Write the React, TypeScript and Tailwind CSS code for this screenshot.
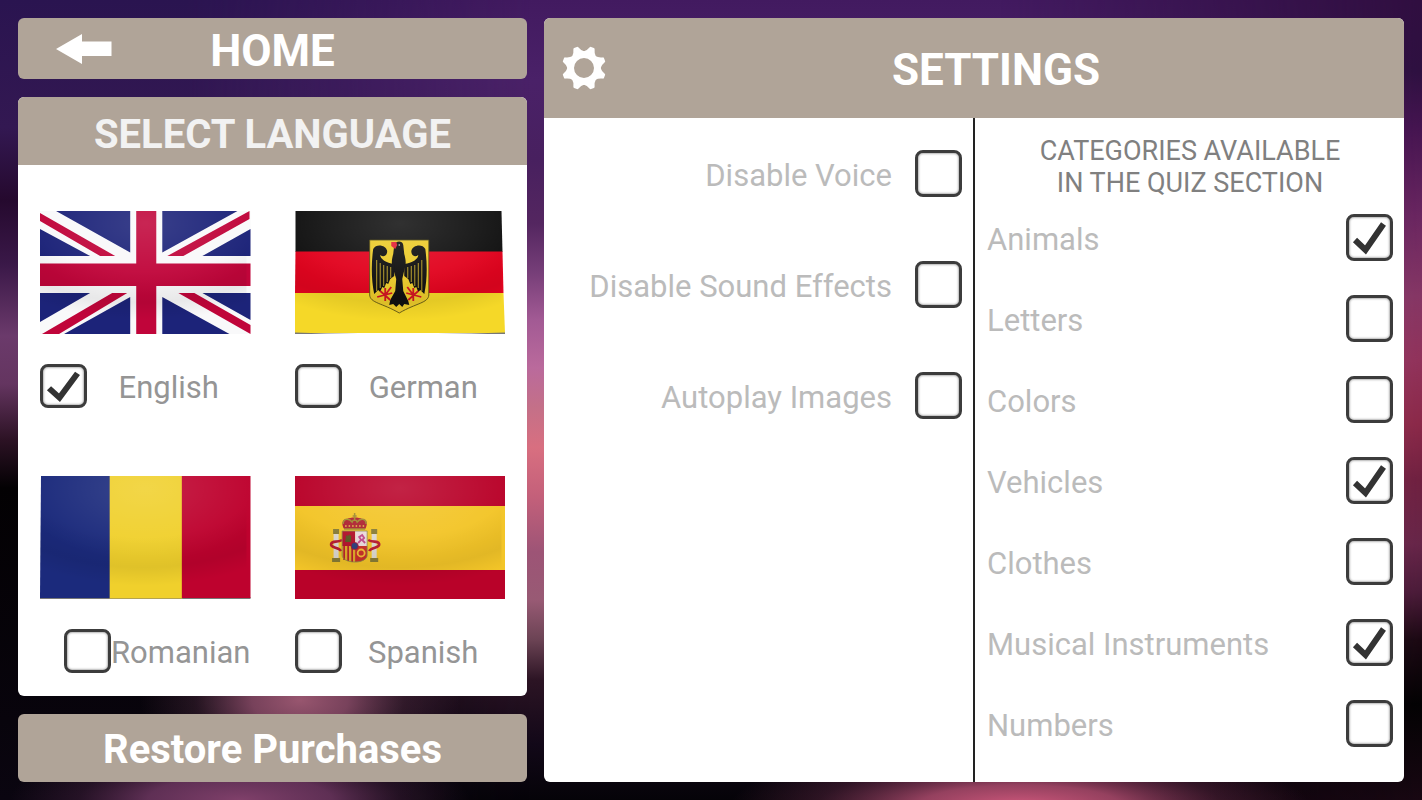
import { useState, type ReactNode } from "react";

const TOGGLES = ["Disable Voice", "Disable Sound Effects", "Autoplay Images"];

const CATEGORIES = [
  { name: "Animals", on: true },
  { name: "Letters", on: false },
  { name: "Colors", on: false },
  { name: "Vehicles", on: true },
  { name: "Clothes", on: false },
  { name: "Musical Instruments", on: true },
  { name: "Numbers", on: false },
];

const TOOTH_ANGLES = [22.5, 67.5, 112.5, 157.5, 202.5, 247.5, 292.5, 337.5];

function Backdrop() {
  return (
    <svg
      className="absolute inset-0 -z-10 h-full w-full"
      viewBox="0 0 1422 800"
      preserveAspectRatio="none"
      aria-hidden="true"
    >
      <defs>
        <linearGradient id="mid" x1="0" y1="0" x2="0" y2="1">
          <stop offset="0" stopColor="#421a60" />
          <stop offset="0.1" stopColor="#4a2168" />
          <stop offset="0.2" stopColor="#48205f" />
          <stop offset="0.28" stopColor="#542660" />
          <stop offset="0.34" stopColor="#763e78" />
          <stop offset="0.4" stopColor="#a25a94" />
          <stop offset="0.46" stopColor="#ba6a9c" />
          <stop offset="0.51" stopColor="#c47088" />
          <stop offset="0.56" stopColor="#d86f80" />
          <stop offset="0.62" stopColor="#c4607a" />
          <stop offset="0.69" stopColor="#9d5476" />
          <stop offset="0.75" stopColor="#985a74" />
          <stop offset="0.8" stopColor="#6b4354" />
          <stop offset="0.85" stopColor="#2c1424" />
          <stop offset="0.93" stopColor="#120818" />
          <stop offset="1" stopColor="#050308" />
        </linearGradient>
        <linearGradient id="west" x1="0" y1="0" x2="0" y2="1">
          <stop offset="0" stopColor="#2a1450" />
          <stop offset="0.16" stopColor="#331852" />
          <stop offset="0.25" stopColor="#25092e" />
          <stop offset="0.33" stopColor="#3a1848" />
          <stop offset="0.42" stopColor="#6b3a6b" />
          <stop offset="0.48" stopColor="#643560" />
          <stop offset="0.55" stopColor="#2c1224" />
          <stop offset="0.61" stopColor="#030103" />
          <stop offset="0.9" stopColor="#08040c" />
          <stop offset="1" stopColor="#0a0510" />
        </linearGradient>
        <linearGradient id="east" x1="0" y1="0" x2="0" y2="1">
          <stop offset="0" stopColor="#300e40" />
          <stop offset="0.09" stopColor="#2e1040" />
          <stop offset="0.16" stopColor="#451450" />
          <stop offset="0.27" stopColor="#6a2660" />
          <stop offset="0.37" stopColor="#853664" />
          <stop offset="0.45" stopColor="#90325a" />
          <stop offset="0.53" stopColor="#8a2848" />
          <stop offset="0.6" stopColor="#6e2040" />
          <stop offset="0.68" stopColor="#662548" />
          <stop offset="0.74" stopColor="#4a1a38" />
          <stop offset="0.8" stopColor="#1a0812" />
          <stop offset="0.88" stopColor="#030203" />
          <stop offset="1" stopColor="#180712" />
        </linearGradient>
        <linearGradient id="fadeRight">
          <stop offset="0.35" stopColor="#fff" />
          <stop offset="1" stopColor="#000" />
        </linearGradient>
        <linearGradient id="fadeLeft">
          <stop offset="0" stopColor="#000" />
          <stop offset="1" stopColor="#fff" />
        </linearGradient>
        <mask id="westMask">
          <rect width="530" height="800" fill="url(#fadeRight)" />
        </mask>
        <mask id="eastMask">
          <rect x="1000" width="422" height="800" fill="url(#fadeLeft)" />
        </mask>
        <radialGradient id="rose">
          <stop offset="0" stopColor="#98566f" />
          <stop offset="0.3" stopColor="#8a4c68" stopOpacity="0.85" />
          <stop offset="0.65" stopColor="#7a4560" stopOpacity="0.25" />
          <stop offset="1" stopColor="#7a4560" stopOpacity="0" />
        </radialGradient>
        <radialGradient id="plum">
          <stop offset="0" stopColor="#80406a" />
          <stop offset="0.4" stopColor="#743a66" stopOpacity="0.8" />
          <stop offset="0.7" stopColor="#643058" stopOpacity="0.3" />
          <stop offset="1" stopColor="#643058" stopOpacity="0" />
        </radialGradient>
        <radialGradient id="coral">
          <stop offset="0" stopColor="#d0587c" />
          <stop offset="0.35" stopColor="#b85074" stopOpacity="0.8" />
          <stop offset="0.7" stopColor="#8a3a60" stopOpacity="0.3" />
          <stop offset="1" stopColor="#8a3a60" stopOpacity="0" />
        </radialGradient>
      </defs>
      <rect width="1422" height="800" fill="url(#mid)" />
      <rect width="530" height="800" fill="url(#west)" mask="url(#westMask)" />
      <rect x="1000" width="422" height="800" fill="url(#east)" mask="url(#eastMask)" />
      <ellipse cx="300" cy="700" rx="160" ry="90" fill="url(#rose)" />
      <ellipse cx="240" cy="800" rx="230" ry="60" fill="url(#plum)" />
      <ellipse cx="1020" cy="806" rx="290" ry="60" fill="url(#coral)" />
    </svg>
  );
}

function ArrowIcon() {
  return (
    <svg width="56" height="30" viewBox="0 0 56 30" fill="#fff" aria-hidden="true">
      <path d="M0 15 26 0v7.5h29.5v14.5H26V30z" />
    </svg>
  );
}

function GearIcon() {
  return (
    <svg width="44" height="44" viewBox="-22 -22 44 44" aria-hidden="true">
      <circle r="13.300" fill="none" stroke="#fff" strokeWidth="6.600" />
      {TOOTH_ANGLES.map((angle) => (
        <path
          key={angle}
          d="M-6-14Q-2.800-16.500-1.500-21H1.500Q2.800-16.500 6-14z"
          transform={`rotate(${angle})`}
          fill="#fff"
          stroke="#fff"
          strokeWidth="2.400"
          strokeLinejoin="round"
        />
      ))}
    </svg>
  );
}

function FlagFrame({ id, label, children }: { id: string; label: string; children: ReactNode }) {
  return (
    <svg
      className="h-[123px] w-full"
      viewBox="0 0 210 123"
      preserveAspectRatio="none"
      role="img"
      aria-label={label}
    >
      <defs>
        <radialGradient id={`${id}-light`} cx="0.5" cy="0.1" r="0.6">
          <stop offset="0" stopColor="#fff" stopOpacity="0.13" />
          <stop offset="1" stopColor="#fff" stopOpacity="0" />
        </radialGradient>
        <radialGradient id={`${id}-fold`} cx="0.5" cy="-0.1" r="1">
          <stop offset="0.6" stopColor="#000" stopOpacity="0" />
          <stop offset="0.85" stopColor="#000" stopOpacity="0.07" />
          <stop offset="1" stopColor="#000" stopOpacity="0" />
        </radialGradient>
      </defs>
      {children}
      <rect width="210" height="122" fill={`url(#${id}-light)`} />
      <rect width="206" height="122" fill={`url(#${id}-fold)`} />
    </svg>
  );
}

function BritishFlag() {
  return (
    <FlagFrame id="gb" label="Flag of the United Kingdom">
      <rect width="210" height="123" fill="#f9f9fa" />
      <path
        fill="#1c2379"
        d="M16 0H90V41.5zM0 18 50 45H0zM122 0H197L122 41.5zM210 18V45H162zM0 82H50L0 111zM90 86V123H24zM122 86 189 123H122zM162 82H210V109z"
      />
      <path
        fill="#c0053a"
        d="M0 2 75 45H60L0 10zM209 0V8L143 45H127zM72 82H87L19 123H2zM138 82H154L210 114V123zM96 0h20v52.500h94V75h-94v48H96V75H0V52.500h96z"
      />
    </FlagFrame>
  );
}

function GermanFlag() {
  return (
    <FlagFrame id="de" label="Flag of Germany">
      <path fill="#121212" d="M.500 0H206L207 41H.500z" />
      <path fill="#e2041f" d="M.500 40.500H207L208 82H0z" />
      <path fill="#f5d828" d="M0 82H208L209.500 122H0z" />
      <path fill="#777" d="M0 121.500Q100 125 209.500 121.500V123H0z" />
      <path
        fill="#eccb2b"
        stroke="#4b4310"
        strokeWidth="0.8"
        d="M74.500 29H133.500V84C133 92 121 92 104 102C87 92 75 92 74.500 84z"
      />
      <g fill="#101010">
        <path d="M99 34c1-4 8-5 9 0l1 9c1 4 2 8 1 12l-3 13 1 12 5 10 1 4-5-1-2 3-3-3-3 3-3-3-4 1 1-5 5-9 1-12-4-13c-1-4 0-8 1-12z" />
        <path d="M99 53c-8-1-14-5-14-9 4 3 7 0 7-4-1-6-11-8-14-2-2 15-2 30 1 45l4-4 2 2 2-5 2 1 2-5 2 1 2-5 4-3z" />
        <path d="M109 53c8-1 14-5 14-9-4 3-7 0-7-4 1-6 11-8 14-2 2 15 2 30-1 45l-4-4-2 2-2-5-2 1-2-5-2 1-2-5-4-3z" />
      </g>
      <path
        stroke="#c9ae2a"
        strokeWidth="0.9"
        d="M81.500 49v31M85 52v25M88.500 54v21M92 55v16M95.500 56v11M112.500 56v11M116 55v16M119.500 54v21M123 52v25M126.500 49v31"
      />
      <path
        fill="none"
        stroke="#d01622"
        strokeWidth="1.800"
        d="m82 86 15-4M85 80l10 9M90 77v13M96 76l-6 8M126 86l-15-4M123 80l-10 9M118 77v13M112 76l6 8"
      />
      <path fill="#e22034" d="M96 31h5l1 3-2 4-4-3z" />
      <circle cx="104" cy="34" r="0.8" fill="#ddd" />
    </FlagFrame>
  );
}

function RomanianFlag() {
  return (
    <FlagFrame id="ro" label="Flag of Romania">
      <path fill="#777" d="M0 121Q105 117 210 121V123H0z" />
      <path fill="#1b2a7c" d="M1 0H70V122H0z" />
      <rect x="69.500" width="72.500" height="122.500" fill="#f0d02c" />
      <rect x="141.500" width="68.500" height="122" fill="#be022e" />
    </FlagFrame>
  );
}

function SpanishFlag() {
  return (
    <FlagFrame id="es" label="Flag of Spain">
      <rect width="210" height="123" fill="#b90229" />
      <rect y="30" width="210" height="64" fill="#f3c528" />
      <path fill="#dcd8d0" d="M38.500 58h5v24h-5zM76.500 58h5v24h-5z" />
      <path fill="#887c35" d="M38 53h6v5h-6zM76 53h6v5h-6zM37 82h8v4h-8zM75 82h8v4h-8z" />
      <path fill="none" stroke="#b81c30" strokeWidth="2.600" d="M47 64c-5 3-10 0-11 4s8 3 10 7M73 64c5 3 10 0 11 4s-8 3-10 7" />
      <path fill="#b3132c" d="M47 55h13v15H47z" />
      <path fill="#ead9dc" d="M60 55h12v15H60z" />
      <path fill="#e0ac2a" d="M47 70h13v16c-8 0-13-3-13-7z" />
      <path fill="#c8302a" d="M60 70h12v9c0 4-4 7-12 7z" />
      <path stroke="#b3132c" strokeWidth="1.500" d="M49 70v14M53 70v15M57 70v16" />
      <path fill="none" stroke="#8c8a4a" strokeWidth="0.8" d="M47 55h25v24c0 4-5 7-12 7-8 0-13-3-13-7z" />
      <path fill="#5a5a22" d="m50 66 1-7 2 1 1-2 1 2 1-1v7z" />
      <path fill="none" stroke="#c14b8c" strokeWidth="1.800" d="m63 67 3-3-2-3 3-2 2 3-2 2 3 3" />
      <circle cx="66" cy="77" r="3.500" fill="none" stroke="#f0bd35" strokeWidth="1.800" />
      <circle cx="59.500" cy="70" r="3.600" fill="#2f3f7c" stroke="#b3132c" strokeWidth="0.8" />
      <path fill="#ae2430" d="M49 53c-3-5-2-10 3-10 3-2 12-2 15 0 5 0 6 5 3 10z" />
      <path fill="none" stroke="#a08b30" strokeWidth="1.500" d="M49 53h21M48 48c0-6 6-6 9-2 1-3 4-3 5 0 3-4 9-4 9 2M59.500 37v8M57.500 40h4" />
      <path stroke="#e4c24a" strokeWidth="1.500" strokeDasharray="1.500 2" d="M50 50h20" />
    </FlagFrame>
  );
}

function CheckBox({
  id,
  defaultChecked,
  checked,
  onChange,
  short,
}: {
  id: string;
  defaultChecked?: boolean;
  checked?: boolean;
  onChange?: () => void;
  short?: boolean;
}) {
  return (
    <span className={short ? "grid h-11 w-[47px] shrink-0" : "grid h-[47px] w-[47px] shrink-0"}>
      <input
        id={id}
        type="checkbox"
        defaultChecked={defaultChecked}
        checked={checked}
        onChange={onChange}
        className="peer col-start-1 row-start-1 h-full w-full cursor-pointer appearance-none rounded-lg border-3 border-[#3c3c3c] bg-white shadow-[inset_0_0_2px_1px_#b5b5b5]"
      />
      <svg
        className="pointer-events-none invisible col-start-1 row-start-1 h-full w-full peer-checked:visible"
        viewBox="0 0 47 47"
        preserveAspectRatio="none"
        fill="none"
        stroke="#333"
        strokeWidth="6"
        aria-hidden="true"
      >
        <path d="m9 26 10.500 10L37.500 10" />
      </svg>
    </span>
  );
}

const LANGUAGES = [
  { name: "English", flag: <BritishFlag /> },
  { name: "German", flag: <GermanFlag /> },
  { name: "Romanian", flag: <RomanianFlag /> },
  { name: "Spanish", flag: <SpanishFlag /> },
];

function LanguagePanel() {
  const [language, setLanguage] = useState("English");

  return (
    <section className="flex flex-1 flex-col overflow-hidden rounded-md bg-white">
      <h2 className="flex h-[68px] items-center justify-center bg-[#b0a498] pt-2 text-[40px] leading-none font-bold text-[#f2f2f2]">
        SELECT LANGUAGE
      </h2>
      <div className="grid grid-cols-2 gap-x-11 gap-y-[68px] px-[22px] pt-[46px] pb-[22px]">
        {LANGUAGES.map(({ name, flag }) => (
          <div key={name} className="flex flex-col gap-[30px]">
            {flag}
            <div className="flex items-center justify-end">
              <CheckBox
                id={name}
                short
                checked={language === name}
                onChange={() => setLanguage(name)}
              />
              <label
                htmlFor={name}
                className={
                  name === "Romanian"
                    ? "pt-1 text-[31px] leading-10 text-[#959595]"
                    : "flex-1 pt-1 text-center text-[31px] leading-10 text-[#959595]"
                }
              >
                {name}
              </label>
            </div>
          </div>
        ))}
      </div>
    </section>
  );
}

function SettingsPanel() {
  return (
    <main className="flex flex-col overflow-hidden rounded-md bg-white">
      <header className="flex h-[100px] items-center bg-[#b0a498] px-[18px]">
        <GearIcon />
        <h1 className="flex-1 pt-1 text-center text-[44px] leading-none font-bold text-white">
          SETTINGS
        </h1>
      </header>
      <div className="grid flex-1 grid-cols-[431fr_429fr]">
        <div className="flex flex-col gap-16 border-r-2 border-[#222] pt-8 pr-[11px]">
          {TOGGLES.map((name) => (
            <div key={name} className="flex items-center justify-end gap-[23px]">
              <label htmlFor={name} className="pt-1 text-[31px] leading-10 text-[#bbb]">
                {name}
              </label>
              <CheckBox id={name} />
            </div>
          ))}
        </div>
        <div className="pt-[17px] pr-[11px] pl-3">
          <h2 className="text-center text-[27px] leading-8 text-[#808080]">
            CATEGORIES AVAILABLE
            <br />
            IN THE QUIZ SECTION
          </h2>
          <div className="mt-[15px] flex flex-col gap-[34px]">
            {CATEGORIES.map(({ name, on }) => (
              <div key={name} className="flex items-center justify-between">
                <label htmlFor={name} className="pt-1 text-[31px] leading-10 text-[#bbb]">
                  {name}
                </label>
                <CheckBox id={name} defaultChecked={on} />
              </div>
            ))}
          </div>
        </div>
      </div>
    </main>
  );
}

export default function App() {
  return (
    <div className="relative isolate grid min-h-screen grid-cols-[509fr_860fr] gap-[17px] p-[18px] font-['Roboto',sans-serif]">
      <Backdrop />
      <div className="flex flex-col gap-[18px]">
        <a
          href="#home"
          className="grid h-[61px] grid-cols-[1fr_auto_1fr] items-center rounded-md bg-[#b0a498] text-white"
        >
          <span className="pl-[38px]">
            <ArrowIcon />
          </span>
          <span className="pt-1 text-[44px] leading-none font-bold">HOME</span>
        </a>
        <LanguagePanel />
        <button
          type="button"
          className="h-[68px] cursor-pointer rounded-md bg-[#b0a498] pt-1 text-[40px] leading-none font-bold text-white"
        >
          Restore Purchases
        </button>
      </div>
      <SettingsPanel />
    </div>
  );
}
